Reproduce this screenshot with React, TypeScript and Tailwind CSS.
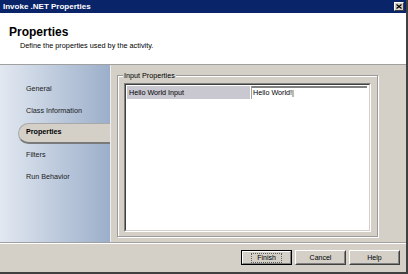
import React from "react";

const font = { fontFamily: '"Liberation Sans", Arial, sans-serif' };

function Btn({ label, def }: { label: string; def?: boolean }) {
  return (
    <div
      className={`w-[51px] h-[15px] bg-[#d4d0c8] flex items-center justify-center text-[7px] text-black ${
        def ? "border border-black" : "border border-t-white border-l-white border-b-[#404040] border-r-[#404040]"
      }`}
    >
      <div
        className={`w-full h-full flex items-center justify-center ${
          def
            ? "border border-t-white border-l-white border-b-[#808080] border-r-[#808080]"
            : "border border-t-[#d4d0c8] border-l-[#d4d0c8] border-b-[#808080] border-r-[#808080]"
        }`}
      >
        {def ? (
          <span className="border border-dotted border-[#606060] px-[5px] leading-[8px]">{label}</span>
        ) : (
          <span className="leading-[8px]">{label}</span>
        )}
      </div>
    </div>
  );
}

export default function App() {
  const items = ["General", "Class Information", "Properties", "Filters", "Run Behavior"];
  return (
    <div
      className="w-[408px] h-[274px] bg-[#d4d0c8] flex flex-col border-r-2 border-b-2 border-r-[#404040] border-b-[#404040] overflow-hidden"
      style={font}
    >
      {/* Title bar */}
      <div className="h-[13px] bg-[#0a246a] flex items-center justify-between pl-[3px] pr-[2px] shrink-0">
        <span className="text-white font-bold text-[8px] leading-none">Invoke .NET Properties</span>
        <div className="w-[10px] h-[9px] bg-[#d4d0c8] border border-t-white border-l-white border-b-[#404040] border-r-[#404040] flex items-center justify-center">
          <svg width="6" height="5" viewBox="0 0 6 5">
            <path d="M0.5 0.5 L5.5 4.5 M5.5 0.5 L0.5 4.5" stroke="#000" strokeWidth="1.2" />
          </svg>
        </div>
      </div>
      {/* Header */}
      <div className="h-[51px] bg-white shrink-0 flex flex-col pl-[9px] pt-[12px]">
        <div className="font-bold text-[12px] leading-[14px] text-black">Properties</div>
        <div className="text-[7.3px] leading-[8px] text-black pl-[11px] mt-[3px]">
          Define the properties used by the activity.
        </div>
      </div>
      <div className="h-px bg-[#a0a0a0] shrink-0" />
      {/* Main */}
      <div className="h-[177px] flex shrink-0">
        <div className="w-[110px] bg-gradient-to-r from-[#e2e8f1] to-[#9cafca] pt-[13px] flex flex-col">
          {items.map((it) =>
            it === "Properties" ? (
              <div key={it} className="h-[22px] ml-[18px] flex items-center">
                <div className="w-full h-[21px] bg-[#d4d0c8] rounded-l-full border border-r-0 border-[#a8a8a8] border-b-2 border-b-[#7a7a7a] flex items-center pl-[7px] font-bold text-[7.2px] text-black">
                  {it}
                </div>
              </div>
            ) : (
              <div key={it} className="h-[22px] flex items-center pl-[26px] text-[7.2px] text-[#1a1a1a]">
                {it}
              </div>
            )
          )}
        </div>
        <div className="flex-1 pl-[6px] pt-[10px] pr-[28px] pb-[5px] border-l border-l-[#eeeeee]">
          <div className="relative h-full border border-[#9a9a9a] shadow-[1px_1px_0_#ffffff,inset_1px_1px_0_#ffffff] px-[6px] pt-[7px] pb-[4px]">
            <span className="absolute left-[5px] top-[-5px] bg-[#d4d0c8] px-px text-[7.2px] leading-[9px] text-black">
              Input Properties
            </span>
            <div className="h-full bg-white border border-t-[#808080] border-l-[#808080] border-b-white border-r-white">
              <div className="h-full border border-t-[#404040] border-l-[#404040] border-b-[#d4d0c8] border-r-[#d4d0c8] pt-px pl-px pr-[2px]">
                <div className="flex h-[13px]">
                  <div className="w-[123px] bg-[#c9c7cf] text-[7.2px] leading-[13px] pl-[2px] text-black">
                    Hello World Input
                  </div>
                  <div className="flex-1 ml-px bg-white border-t-2 border-l border-t-[#808080] border-l-[#a0a0a0] text-[7.2px] leading-[10px] pl-px text-black">
                    Hello World!|
                  </div>
                </div>
              </div>
            </div>
          </div>
        </div>
      </div>
      <div className="h-px bg-[#a0a0a0] shrink-0" />
      <div className="h-px bg-white shrink-0" />
      {/* Buttons */}
      <div className="flex-1 flex justify-end items-start pt-[6px] pr-[6px] gap-[3px]">
        <Btn label="Finish" def />
        <Btn label="Cancel" />
        <Btn label="Help" />
      </div>
    </div>
  );
}
